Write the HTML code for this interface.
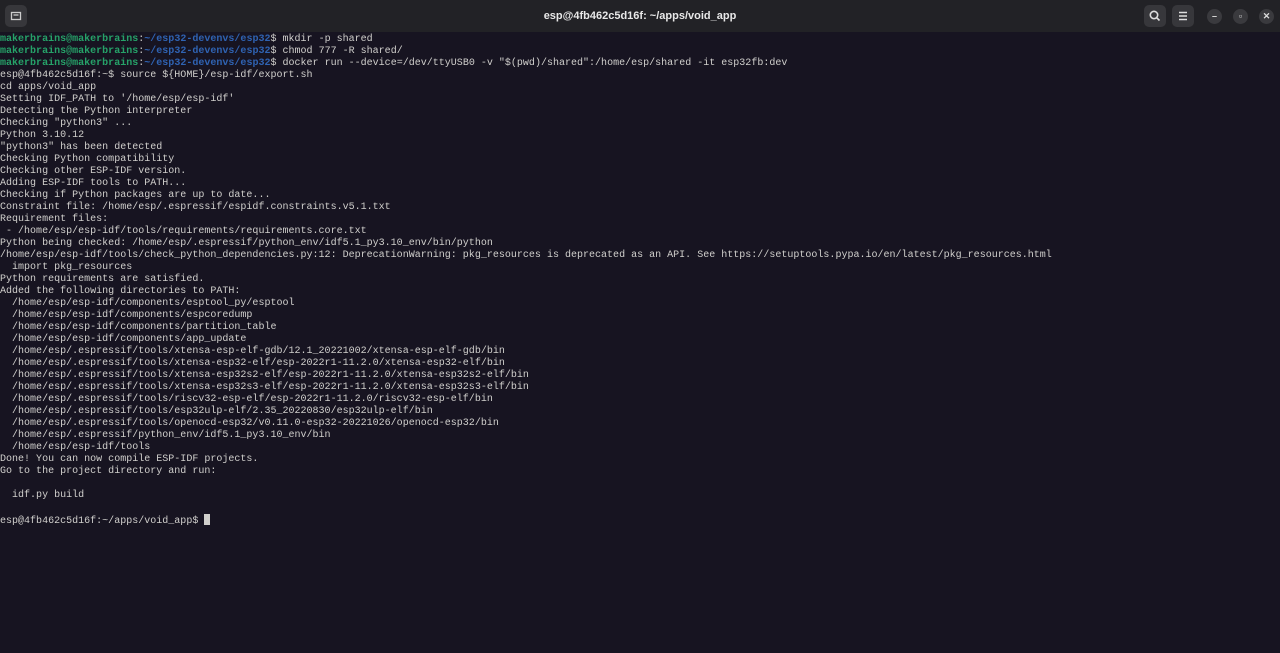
<!DOCTYPE html>
<html><head><meta charset="utf-8"><style>
html,body{margin:0;padding:0;width:1280px;height:653px;overflow:hidden;background:#171421;}
.bar{position:absolute;left:0;top:0;width:1280px;height:32px;background:#222226;}
.title{position:absolute;left:0;width:1280px;top:10px;text-align:center;color:#e8e8e8;font:bold 11px "Liberation Sans",sans-serif;}
.btn{position:absolute;top:5px;width:22px;height:22px;border-radius:5px;background:#37373b;}
.rb{position:absolute;top:9px;width:15px;height:15px;border-radius:50%;background:#3a3a3e;color:#ddd;font:bold 9px "Liberation Sans",sans-serif;text-align:center;line-height:15px;}
pre{position:absolute;left:0;top:34px;margin:0;font:10.02px/12px "Liberation Mono",monospace;color:#d0cfcc;}
.g{color:#26a269;font-weight:bold}.b{color:#2f63b3;font-weight:bold}
.cur{display:inline-block;width:6px;height:11px;background:#d0cfcc;vertical-align:-2px}
</style></head><body>
<div class="bar">
<div class="btn" style="left:5px;"><svg width="22" height="22"><rect x="6.5" y="7.5" width="9" height="7" fill="none" stroke="#ccc" stroke-width="1.3"/><line x1="8.5" y1="10" x2="13.5" y2="10" stroke="#ccc" stroke-width="1.3"/></svg></div>
<div class="title">esp@4fb462c5d16f: ~/apps/void_app</div>
<div class="btn" style="left:1144px;"><svg width="22" height="22"><circle cx="10" cy="10" r="3.7" fill="none" stroke="#ddd" stroke-width="1.6"/><line x1="12.8" y1="12.8" x2="15.5" y2="15.5" stroke="#ddd" stroke-width="1.6"/></svg></div>
<div class="btn" style="left:1172px;"><svg width="22" height="22"><path d="M7 7.5h8M7 11h8M7 14.5h8" stroke="#ddd" stroke-width="1.4"/></svg></div>
<div class="rb" style="left:1207px;">–</div>
<div class="rb" style="left:1233px;">▫</div>
<div class="rb" style="left:1259px;">✕</div>
</div>
<pre><span class="g">makerbrains@makerbrains</span>:<span class="b">~/esp32-devenvs/esp32</span>$ mkdir -p shared
<span class="g">makerbrains@makerbrains</span>:<span class="b">~/esp32-devenvs/esp32</span>$ chmod 777 -R shared/
<span class="g">makerbrains@makerbrains</span>:<span class="b">~/esp32-devenvs/esp32</span>$ docker run --device=/dev/ttyUSB0 -v "$(pwd)/shared":/home/esp/shared -it esp32fb:dev
esp@4fb462c5d16f:~$ source ${HOME}/esp-idf/export.sh
cd apps/void_app
Setting IDF_PATH to '/home/esp/esp-idf'
Detecting the Python interpreter
Checking "python3" ...
Python 3.10.12
"python3" has been detected
Checking Python compatibility
Checking other ESP-IDF version.
Adding ESP-IDF tools to PATH...
Checking if Python packages are up to date...
Constraint file: /home/esp/.espressif/espidf.constraints.v5.1.txt
Requirement files:
 - /home/esp/esp-idf/tools/requirements/requirements.core.txt
Python being checked: /home/esp/.espressif/python_env/idf5.1_py3.10_env/bin/python
/home/esp/esp-idf/tools/check_python_dependencies.py:12: DeprecationWarning: pkg_resources is deprecated as an API. See https://setuptools.pypa.io/en/latest/pkg_resources.html
  import pkg_resources
Python requirements are satisfied.
Added the following directories to PATH:
  /home/esp/esp-idf/components/esptool_py/esptool
  /home/esp/esp-idf/components/espcoredump
  /home/esp/esp-idf/components/partition_table
  /home/esp/esp-idf/components/app_update
  /home/esp/.espressif/tools/xtensa-esp-elf-gdb/12.1_20221002/xtensa-esp-elf-gdb/bin
  /home/esp/.espressif/tools/xtensa-esp32-elf/esp-2022r1-11.2.0/xtensa-esp32-elf/bin
  /home/esp/.espressif/tools/xtensa-esp32s2-elf/esp-2022r1-11.2.0/xtensa-esp32s2-elf/bin
  /home/esp/.espressif/tools/xtensa-esp32s3-elf/esp-2022r1-11.2.0/xtensa-esp32s3-elf/bin
  /home/esp/.espressif/tools/riscv32-esp-elf/esp-2022r1-11.2.0/riscv32-esp-elf/bin
  /home/esp/.espressif/tools/esp32ulp-elf/2.35_20220830/esp32ulp-elf/bin
  /home/esp/.espressif/tools/openocd-esp32/v0.11.0-esp32-20221026/openocd-esp32/bin
  /home/esp/.espressif/python_env/idf5.1_py3.10_env/bin
  /home/esp/esp-idf/tools
Done! You can now compile ESP-IDF projects.
Go to the project directory and run:

  idf.py build

esp@4fb462c5d16f:~/apps/void_app$ <span class="cur"></span></pre>
</body></html>
